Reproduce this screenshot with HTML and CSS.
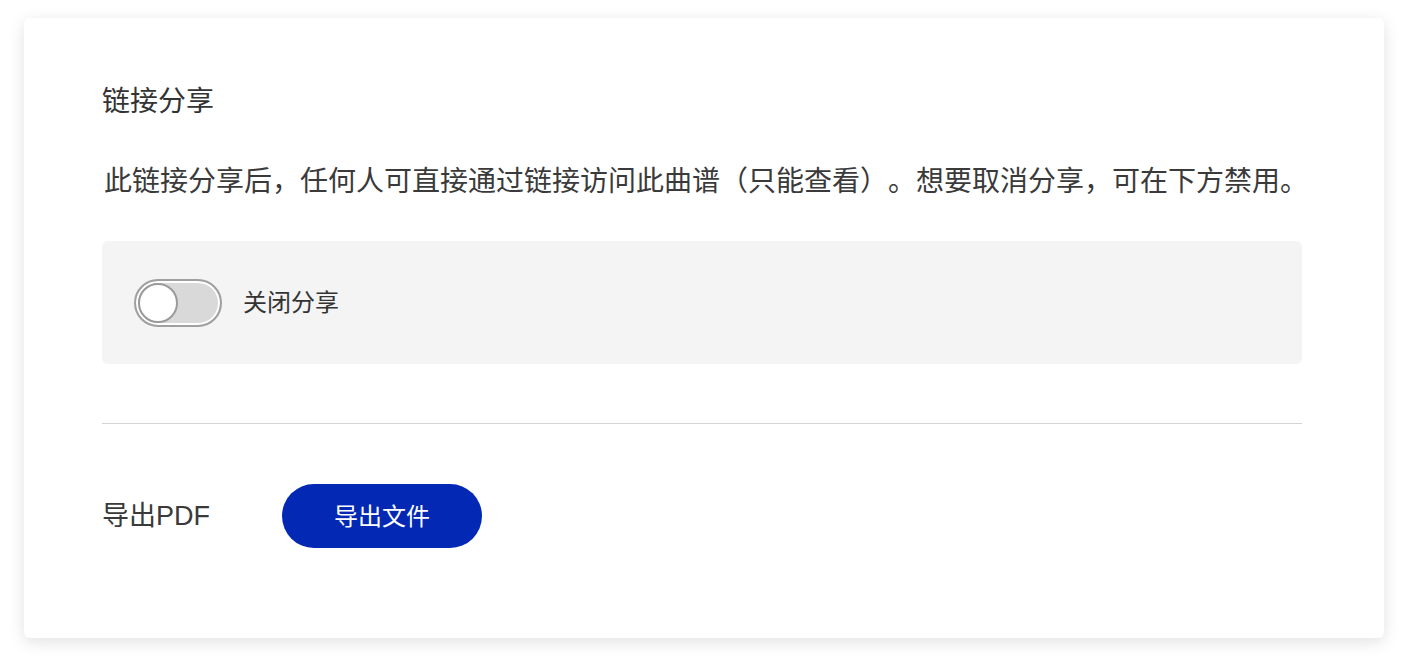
FILE: index.html
```html
<!DOCTYPE html>
<html lang="zh-CN">
<head>
    <meta charset="UTF-8">
    <title>分享与导出</title>
    <link rel="stylesheet" href="styles.css">
</head>
<body>
<div class="panel">
    <h2 class="panelTitle">链接分享</h2>
    <p class="panelDesc">此链接分享后，任何人可直接通过链接访问此曲谱（只能查看）。想要取消分享，可在下方禁用。</p>
    <div class="shareBox">
        <span class="switch"><span class="knob"></span></span>
        <span class="switchText">关闭分享</span>
    </div>
    <div class="line"></div>
    <div class="exportRow">
        <span class="exportLabel">导出PDF</span>
        <a href="#" class="exportBtn">导出文件</a>
    </div>
</div>
</body>
</html>
```

FILE: styles.css
```css
* {
    margin: 0;
    padding: 0;
    box-sizing: border-box;
}

body {
    background-color: #fff;
    font-family: "Liberation Sans", "Noto Sans CJK SC", sans-serif;
    color: #3a3a3a;
}

.panel {
    width: 1360px;
    height: 620px;
    margin: 18px 24px;
    padding: 64px 82px 0 78px;
    background-color: #fff;
    border-radius: 6px;
    box-shadow: 0 4px 16px rgba(0, 0, 0, 0.12);
}

.panelTitle {
    font-size: 28px;
    font-weight: 400;
    line-height: 40px;
    color: #333;
}

.panelDesc {
    margin-top: 37px;
    padding-left: 2px;
    font-family: "Noto Sans CJK SC", sans-serif;
    font-size: 28px;
    line-height: 40px;
    white-space: nowrap;
    text-spacing-trim: space-all;
}

.shareBox {
    display: flex;
    align-items: center;
    gap: 21px;
    height: 123px;
    margin-top: 42px;
    padding: 0 32px;
    background-color: #f4f4f4;
    border-radius: 6px;
}

.switch {
    display: flex;
    align-items: center;
    width: 88px;
    height: 48px;
    padding: 0 2px;
    border: 2px solid #a0a0a0;
    border-radius: 24px;
    background-color: #d9d9d9;
    box-shadow: inset 0 0 0 2px #fff;
    cursor: pointer;
}

.knob {
    width: 40px;
    height: 40px;
    border: 2px solid #9a9a9a;
    border-radius: 50%;
    background-color: #fff;
}

.switchText {
    font-size: 24px;
    line-height: 32px;
    color: #333;
}

.line {
    height: 1px;
    margin-top: 59px;
    background-color: #d4d4d4;
}

.exportRow {
    display: flex;
    align-items: center;
    height: 64px;
    margin-top: 60px;
}

.exportLabel {
    width: 180px;
    font-size: 27px;
    line-height: 36px;
}

.exportBtn {
    display: flex;
    align-items: center;
    justify-content: center;
    width: 200px;
    height: 64px;
    padding-bottom: 3px;
    border-radius: 32px;
    background-color: #0228b4;
    color: #fff;
    font-size: 24px;
    text-decoration: none;
}
```
